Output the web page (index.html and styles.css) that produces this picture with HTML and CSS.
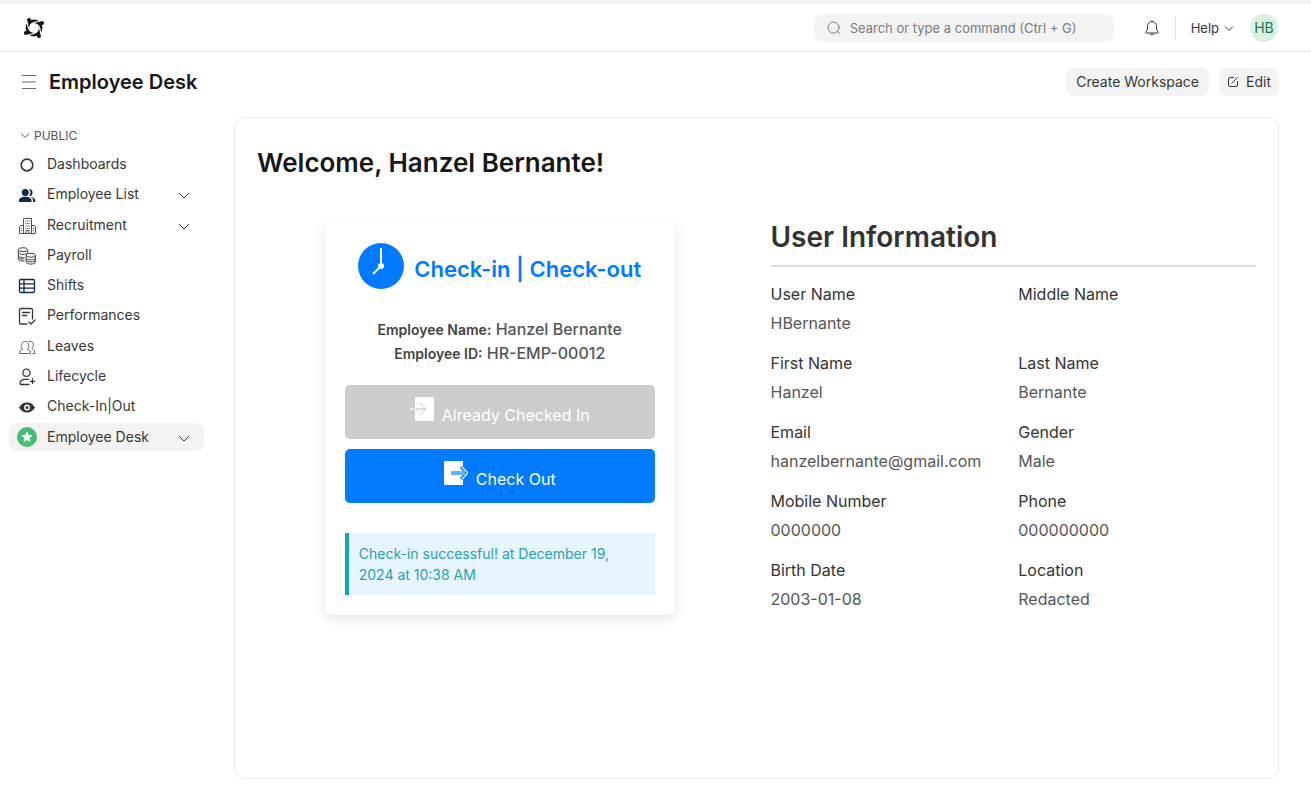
FILE: index.html
```html
<!DOCTYPE html>
<html lang="en">
<head>
<meta charset="utf-8">
<meta name="viewport" content="width=device-width, initial-scale=1">
<title>Employee Desk</title>
<link rel="stylesheet" href="styles.css">
</head>
<body>
<header class="navbar">
  <a class="logo" href="#" aria-label="Home">
    <svg width="28" height="28" viewBox="0 0 28 28" aria-hidden="true">
      <circle cx="14" cy="14" r="6.600" fill="none" stroke="#151515" stroke-width="3.600"/>
      <g id="arm">
        <circle cx="9" cy="5.800" r="1.900" fill="#151515"/>
        <path d="M7.500 6.500L10.500 6L12 8L8 9.500Z" fill="#151515"/>
        <path d="M9.800 14C9.800 10 13 7.500 19.500 7.500" fill="none" stroke="#fff" stroke-width="1.100"/>
      </g>
      <use href="#arm" transform="rotate(90 14 14)"/>
      <use href="#arm" transform="rotate(180 14 14)"/>
      <use href="#arm" transform="rotate(270 14 14)"/>
    </svg>
  </a>
  <div class="nav-right">
    <label class="search">
      <svg width="16" height="16" viewBox="0 0 16 16" fill="none" stroke="#7c7c7c" stroke-linecap="round" aria-hidden="true"><circle cx="7.500" cy="7.500" r="5.500"/><path d="M11.500 11.500L13.500 13.500"/></svg>
      <input type="text" placeholder="Search or type a command (Ctrl + G)" aria-label="Search or type a command">
    </label>
    <button class="plain bell" aria-label="Notifications">
      <svg width="16" height="18" viewBox="0 0 16 18" fill="none" stroke="#383838" stroke-linejoin="round" aria-hidden="true"><path d="M8 2.500C5 2.500 3.500 4.700 3.500 7.200V10L1.800 13.200C1.600 13.700 1.800 14 2.300 14H13.700C14.200 14 14.400 13.700 14.200 13.200L12.500 10V7.200C12.500 4.700 11 2.500 8 2.500Z"/><path d="M8 1.500V2.500M6 14.500C6.300 16.300 9.700 16.300 10 14.500"/></svg>
    </button>
    <span class="divider"></span>
    <button class="plain help">Help
      <svg width="10" height="10" viewBox="0 0 10 10" fill="none" stroke="#383838" aria-hidden="true"><path d="M1 3.500L5 7.500L9 3.500"/></svg>
    </button>
    <button class="plain avatar">HB</button>
  </div>
</header>

<div class="page-head">
  <button class="plain menu" aria-label="Toggle sidebar">
    <svg width="16" height="16" viewBox="0 0 16 16" stroke="#6a6a6a" aria-hidden="true"><path d="M1 1.500H15M1 8H15M1 14.500H15"/></svg>
  </button>
  <h1>Employee Desk</h1>
  <div class="actions">
    <button class="btn wide">Create Workspace</button>
    <button class="btn">
      <svg width="12" height="12" viewBox="0 0 12 12" fill="none" stroke="#383838" stroke-linecap="round" aria-hidden="true"><path d="M6.500 1.500H3Q1.500 1.500 1.500 3V9Q1.500 10.500 3 10.500H9Q10.500 10.500 10.500 9V5.500M5 7L10.500 1.500"/></svg>
      Edit</button>
  </div>
</div>

<div class="layout">
  <nav class="sidebar" aria-label="Workspaces">
    <button class="plain section">
      <svg width="10" height="10" viewBox="0 0 10 10" fill="none" stroke="#525252" aria-hidden="true"><path d="M1 3.500L5 7.500L9 3.500"/></svg>
      PUBLIC</button>
    <a class="item" href="#">
      <svg width="20" height="20" viewBox="0 0 20 20" fill="none" stroke="#383838" stroke-width="1.700" aria-hidden="true"><circle cx="10" cy="10" r="5.800"/></svg>
      <span>Dashboards</span></a>
    <a class="item" href="#">
      <svg width="20" height="20" viewBox="0 0 20 20" fill="#112b42" aria-hidden="true"><circle cx="8.300" cy="7.500" r="3.500"/><path d="M2 17V15.500C2 13 5 11.800 8.300 11.800S14.500 13 14.500 15.500V17ZM12 3.900A3.500 3.500 0 0 1 12 11A5.500 5.500 0 0 0 12 3.900ZM14 11.900C17 12.500 18.200 13.700 18.200 15.500V17H16V15.500C16 14 15.500 12.900 14 11.900Z"/></svg>
      <span>Employee List</span>
      <svg class="caret" width="12" height="12" viewBox="0 0 12 12" fill="none" stroke="#383838" aria-hidden="true"><path d="M1 4L6 9L11 4"/></svg></a>
    <a class="item parent" href="#">
      <svg width="20" height="20" viewBox="0 0 20 20" fill="none" stroke="#525252" aria-hidden="true"><path d="M6.500 17.500V2.500H14.500V17.500M6.500 9.500H3.500L2.500 11V17.500H18.500V11L17.500 9.500H14.500M9 17.500V14.500H12V17.500"/><path d="M8.500 5H12.800M8.500 7.500H12.800M8.500 10H12.800M8.500 12.500H12.800" stroke-dasharray="1 .6"/><path d="M4.500 12V16M16.500 12V16" stroke-dasharray="1 1"/></svg>
      <span>Recruitment</span>
      <svg class="caret" width="12" height="12" viewBox="0 0 12 12" fill="none" stroke="#383838" aria-hidden="true"><path d="M1 4L6 9L11 4"/></svg></a>
    <a class="item" href="#">
      <svg width="20" height="20" viewBox="0 0 20 20" fill="none" stroke="#454545" aria-hidden="true"><ellipse cx="6" cy="3.700" rx="4.600" ry="2"/><path d="M1.400 3.700V13C1.400 14.500 4 15.300 7.500 15M1.400 6.500C1.400 9 10.600 9 10.600 6.500V3.700M1.400 9.500C1.400 11 4 12 7.500 11.400M1.400 12C1.400 12.500 4 13.500 7.500 13"/><ellipse cx="13.800" cy="9.200" rx="4.600" ry="2"/><path d="M9.200 9.200V16C9.200 18.800 18.400 18.800 18.400 16V9.200M9.200 12C9.200 14.500 18.400 14.500 18.400 12M9.200 14C9.200 16.600 18.400 16.600 18.400 14"/></svg>
      <span>Payroll</span></a>
    <a class="item" href="#">
      <svg width="20" height="20" viewBox="0 0 20 20" fill="none" stroke="#112b42" stroke-width="1.300" aria-hidden="true"><rect x="2.500" y="3.500" width="15" height="13" rx="1.200"/><path d="M2.500 7.800H17.500M2.500 12.200H17.500M7 3.500V16.500"/></svg>
      <span>Shifts</span></a>
    <a class="item" href="#">
      <svg width="20" height="20" viewBox="0 0 20 20" fill="none" stroke="#383838" stroke-width="1.300" stroke-linecap="round" stroke-linejoin="round" aria-hidden="true"><path d="M10 18H4Q2.500 18 2.500 16.500V4Q2.500 2.500 4 2.500H14Q15.500 2.500 15.500 4V13M5.500 6.500H12.500M5.500 9.500H9.500M12 16L14 18L18 14"/></svg>
      <span>Performances</span></a>
    <a class="item parent" href="#">
      <svg width="20" height="20" viewBox="0 0 20 20" fill="none" stroke="#666" aria-hidden="true"><path d="M2.500 16.500V15C2.500 13 5.500 13.300 6 12C5.500 11.200 3.500 11.300 4.200 9.500C5 8 4 4.500 8 4.500S11 8 11.800 9.500C12.500 11.300 10.500 11.200 10 12C10.500 13.300 13.500 13 13.500 15V16.500ZM11.500 4.800C15.500 3.500 17 5.500 16 9.500C15.700 10.500 15 10.800 15 11.500C15 13 18 12.800 18 15V16.500H15.500"/></svg>
      <span>Leaves</span></a>
    <a class="item" href="#">
      <svg width="20" height="20" viewBox="0 0 20 20" fill="none" stroke="#383838" stroke-width="1.300" stroke-linecap="round" aria-hidden="true"><circle cx="9.500" cy="5.800" r="3.600"/><path d="M12 17.500H4Q3 17.500 3 16.500C3 13.500 5.500 12.300 8 12.300H11.500M15.500 12V16.500M13.200 14.300H17.800"/></svg>
      <span>Lifecycle</span></a>
    <a class="item" href="#">
      <svg width="20" height="20" viewBox="0 0 20 20" aria-hidden="true"><path d="M2 10.500C4.500 6.500 7 5.500 10 5.500S15.500 6.500 18 10.500C15.500 14.500 13 15.500 10 15.500S4.500 14.500 2 10.500Z" fill="#383838"/><circle cx="10" cy="10.500" r="2.900" fill="#fff"/><circle cx="10" cy="10.500" r="1.500" fill="#383838"/></svg>
      <span>Check-In|Out</span></a>
    <a class="item active" href="#" aria-current="page">
      <svg width="20" height="20" viewBox="0 0 20 20" aria-hidden="true"><circle cx="10" cy="10" r="10" fill="#48bb74"/><path d="M10 5L11.500 8.200L15 8.600L12.400 11L13.100 14.500L10 12.800L6.900 14.500L7.600 11L5 8.600L8.500 8.200Z" fill="#fff" stroke="#fff" stroke-width=".6" stroke-linejoin="round"/></svg>
      <span>Employee Desk</span>
      <svg class="caret" width="12" height="12" viewBox="0 0 12 12" fill="none" stroke="#383838" aria-hidden="true"><path d="M1 5L6 10L11 5"/></svg></a>
  </nav>

  <main class="main">
    <h2 class="welcome">Welcome, Hanzel Bernante!</h2>
    <div class="columns">
      <section class="card">
        <div class="card-title">
          <svg width="46" height="46" viewBox="0 0 46 46" aria-hidden="true"><circle cx="23" cy="23" r="23" fill="#007bff"/><path d="M23 5V23L15 31" fill="none" stroke="#fff" stroke-width="2"/><circle cx="23" cy="23" r="3" fill="#fff"/></svg>
          <h3>Check-in | Check-out</h3>
        </div>
        <div class="who">
          <p><strong>Employee Name:</strong> Hanzel Bernante</p>
          <p><strong>Employee ID:</strong> HR-EMP-00012</p>
        </div>
        <button class="action" disabled>
          <svg width="24" height="24" viewBox="0 0 24 24" fill="none" aria-hidden="true"><rect x="5" width="19" height="24" rx="1" fill="#fff"/><path d="M0 12H5" stroke="#e8e8e8" stroke-width="2"/><path d="M5 12H15" stroke="#ddd" stroke-width="2"/><path d="M10 6L16 12L10 18" stroke="#ccc"/></svg>
          Already Checked In</button>
        <button class="action">
          <svg width="24" height="24" viewBox="0 0 24 24" fill="none" aria-hidden="true"><rect width="19" height="24" rx="1" fill="#fff"/><path d="M17 6L23 12L17 18" stroke="#007bff" stroke-width="3"/><path d="M18 6L24 12L18 18" stroke="#d5e9ff" stroke-width="1.500"/><path d="M7 12H21" stroke="#66b0ff" stroke-width="4"/></svg>
          Check Out</button>
        <p class="notice" role="status">Check-in successful! at December 19, 2024 at 10:38 AM</p>
      </section>
      <section class="info">
        <h2>User Information</h2>
        <dl>
          <div><dt>User Name</dt><dd>HBernante</dd></div>
          <div><dt>Middle Name</dt><dd></dd></div>
          <div><dt>First Name</dt><dd>Hanzel</dd></div>
          <div><dt>Last Name</dt><dd>Bernante</dd></div>
          <div><dt>Email</dt><dd>hanzelbernante@gmail.com</dd></div>
          <div><dt>Gender</dt><dd>Male</dd></div>
          <div><dt>Mobile Number</dt><dd>0000000</dd></div>
          <div><dt>Phone</dt><dd>000000000</dd></div>
          <div><dt>Birth Date</dt><dd>2003-01-08</dd></div>
          <div><dt>Location</dt><dd>Redacted</dd></div>
        </dl>
      </section>
    </div>
  </main>
</div>
</body>
</html>
```
FILE: styles.css
```css
* { box-sizing: border-box; }
body {
  margin: 0;
  min-height: 100vh;
  display: flex;
  flex-direction: column;
  background: #fff;
  color: #383838;
  font: 14px/21px Inter, "Liberation Sans", sans-serif;
}
h1, h2, h3, p, dl, dd { margin: 0; }
svg { display: block; flex: none; }
button, input { font: inherit; color: inherit; }
.plain { border: 0; padding: 0; background: none; display: flex; align-items: center; }

.navbar {
  height: 52px;
  padding: 0 33px 0 20px;
  display: flex;
  align-items: center;
  justify-content: space-between;
  border-top: 4px solid #f1f1f1;
  border-bottom: 1px solid #ededed;
}
.nav-right { display: flex; align-items: center; }
.search {
  width: 300px;
  height: 28px;
  padding: 0 12px;
  display: flex;
  align-items: center;
  gap: 8px;
  border-radius: 8px;
  background: #f3f3f3;
}
.search input { flex: 1; min-width: 0; border: 0; padding: 1px 0 0; background: none; outline: 0; font-size: 13px; }
.search input::placeholder { color: #7c7c7c; opacity: 1; }
.bell { margin-left: 30px; }
.divider { width: 1px; height: 24px; margin: 0 15px; background: #e2e2e2; }
.help { gap: 5px; padding-top: 1px; font-size: 13px; }
.avatar {
  width: 28px;
  height: 28px;
  margin-left: 16px;
  justify-content: center;
  border-radius: 50%;
  background: #daf0e1;
  color: #16794c;
}

.page-head { height: 60px; padding: 0 32px 0 21px; display: flex; align-items: center; gap: 12px; }
.page-head h1 { font-size: 20px; font-weight: 600; line-height: 28px; color: #171717; }
.actions { margin-left: auto; display: flex; gap: 10px; }
.btn {
  height: 28px;
  padding: 0 8px 1px;
  display: flex;
  align-items: center;
  gap: 7px;
  border: 0;
  border-radius: 8px;
  background: #f3f3f3;
}
.btn.wide { padding: 0 10px 1px; }

.layout { flex: 1; display: flex; gap: 30px; padding: 5px 32px 33px 9px; }
.sidebar { width: 195px; flex: none; padding-top: 6px; display: flex; flex-direction: column; gap: 2px; }
.section { height: 24px; margin-bottom: 2px; padding-left: 11px; gap: 4px; font-size: 12px; color: #525252; }
.item {
  height: 28px;
  padding: 0 14px 0 8px;
  display: flex;
  align-items: center;
  gap: 10px;
  border-radius: 8px;
  color: #383838;
  text-decoration: none;
}
.item span { padding-bottom: 3px; }
.item.parent { height: 29px; }
.item.active { background: #f3f3f3; }
.item.active span { padding-bottom: 1px; }
.caret { margin-left: auto; }

.main { flex: 1; min-width: 0; padding: 28px 22px; border: 1px solid #ededed; border-radius: 12px; }
.welcome { font-size: 26px; font-weight: 600; line-height: 34px; color: #171717; }
.columns { display: grid; grid-template-columns: 1fr 1fr; gap: 28px; margin-top: 41px; align-items: start; }
.card {
  width: 350px;
  max-width: 100%;
  justify-self: center;
  padding: 22px 20px 20px;
  border-radius: 8px;
  box-shadow: 0 4px 12px rgba(0, 0, 0, .1);
}
.card-title { display: flex; justify-content: center; align-items: center; gap: 10px; }
.card-title h3 { padding-top: 6px; font-size: 22px; font-weight: 600; line-height: 28px; color: #007bff; }
.who { margin: 28px 0 20px; text-align: center; font-size: 16px; font-weight: 500; line-height: 24px; color: #555; }
.who strong { font-size: 14px; font-weight: 600; line-height: 20px; color: #444; }
.action {
  width: 100%;
  height: 54px;
  margin-bottom: 10px;
  padding: 0 0 6px;
  display: flex;
  justify-content: center;
  align-items: flex-end;
  gap: 8px;
  border: 0;
  border-radius: 5px;
  background: #007bff;
  color: #fff;
  font-size: 16px;
  line-height: 36px;
}
.action svg { align-self: flex-start; margin-top: 12px; }
.action:disabled { background: #ccc; }
.notice {
  margin-top: 30px;
  padding: 10px;
  border-left: 4px solid #17a2b8;
  background: #e7f5ff;
  color: #2a9fb5;
}
.info h2 {
  padding-bottom: 12px;
  border-bottom: 2px solid #ddd;
  font-size: 28px;
  font-weight: 600;
  line-height: 32px;
  color: #333;
}
.info dl { display: grid; grid-template-columns: 1fr 1fr; gap: 16px 10px; margin-top: 15px; }
.info dl > div { min-height: 53px; font-size: 16px; line-height: 24px; }
.info dt { margin-bottom: 5px; color: #333; }
.info dd { color: #555; }
```
